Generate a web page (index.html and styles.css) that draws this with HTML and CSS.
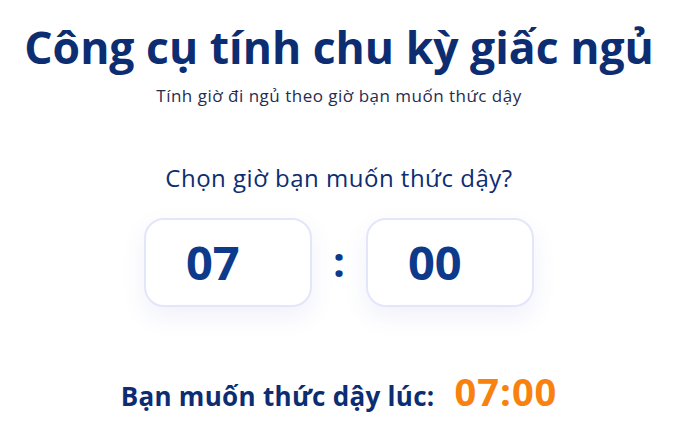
FILE: index.html
```html
<!DOCTYPE html>
<html lang="vi">
<head>
  <meta charset="UTF-8">
  <title>Công cụ tính chu kỳ giấc ngủ</title>
  <link rel="stylesheet" href="styles.css">
</head>
<body>
  <div class="container">
    <h1>Công cụ tính chu kỳ giấc ngủ</h1>
    <p class="subtitle">Tính giờ đi ngủ theo giờ bạn muốn thức dậy</p>

    <h3>Chọn giờ bạn muốn thức dậy?</h3>
    <div class="time-picker">
      <input type="text" class="time-input" id="hour" value="07" maxlength="2">
      <span class="time-sep">:</span>
      <input type="text" class="time-input" id="minute" value="00" maxlength="2">
    </div>

    <div class="result">
      <span class="result-label">Bạn muốn thức dậy lúc:</span>
      <span class="result-time" id="wakeTime">07:00</span>
    </div>
  </div>
</body>
</html>
```

FILE: styles.css
```css
body {
  margin: 0;
  background-color: #fff;
  font-family: "Open Sans", "Noto Sans", sans-serif;
  color: #0c2d72;
}

.container {
  display: flex;
  flex-direction: column;
  align-items: center;
  padding-top: 18px;
}

h1 {
  margin: 0;
  font-size: 44.5px;
  font-weight: 700;
  line-height: 1.3;
  color: #0c2d72;
}

.subtitle {
  margin: 8px 0 0;
  font-size: 17px;
  letter-spacing: 0.5px;
  color: #1f2d52;
}

h3 {
  margin: 54px 0 0;
  font-size: 24px;
  font-weight: 400;
  letter-spacing: 0.5px;
  color: #0c2d72;
}

.time-picker {
  display: flex;
  align-items: center;
  margin-top: 24px;
}

.time-input {
  width: 168px;
  height: 89px;
  box-sizing: border-box;
  padding: 0 0 0 40px;
  border: 2px solid #e3e6fb;
  border-radius: 20px;
  background-color: #fff;
  box-shadow: 0 10px 24px rgba(70, 80, 190, 0.08);
  font-family: inherit;
  font-size: 47px;
  font-weight: 700;
  color: #0d3a8a;
  outline: none;
}

.time-sep {
  width: 54px;
  text-align: center;
  font-size: 42px;
  font-weight: 700;
  color: #0d3a8a;
  line-height: 1;
  margin-top: -2px;
}

.result {
  display: flex;
  align-items: baseline;
  gap: 20px;
  margin-top: 58px;
}

.result-label {
  font-size: 26px;
  font-weight: 700;
  letter-spacing: 0.3px;
  color: #0c2d72;
}

.result-time {
  font-size: 38px;
  font-weight: 700;
  letter-spacing: 1px;
  color: #f8810f;
}
```
